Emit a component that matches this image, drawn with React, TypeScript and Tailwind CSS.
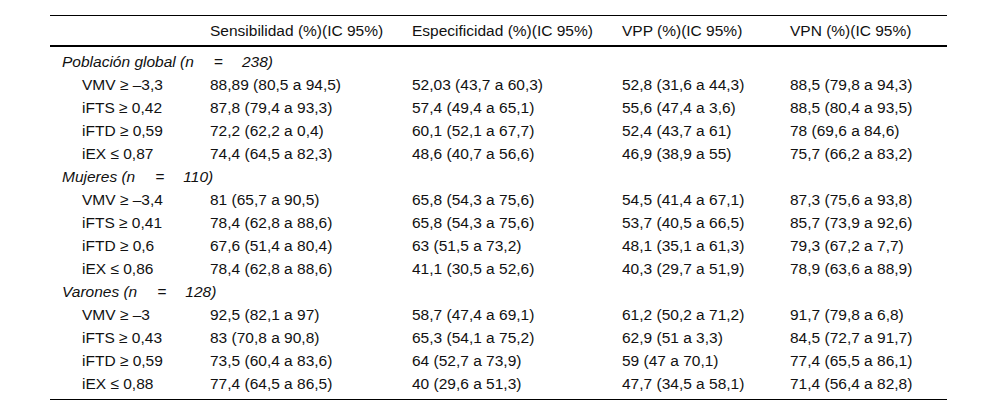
const groups = [
  {
    title: "Población global",
    n: "238",
    rows: [
      ["VMV ≥ –3,3", "88,89 (80,5 a 94,5)", "52,03 (43,7 a 60,3)", "52,8 (31,6 a 44,3)", "88,5 (79,8 a 94,3)"],
      ["iFTS ≥ 0,42", "87,8 (79,4 a 93,3)", "57,4 (49,4 a 65,1)", "55,6 (47,4 a 3,6)", "88,5 (80,4 a 93,5)"],
      ["iFTD ≥ 0,59", "72,2 (62,2 a 0,4)", "60,1 (52,1 a 67,7)", "52,4 (43,7 a 61)", "78 (69,6 a 84,6)"],
      ["iEX ≤ 0,87", "74,4 (64,5 a 82,3)", "48,6 (40,7 a 56,6)", "46,9 (38,9 a 55)", "75,7 (66,2 a 83,2)"],
    ],
  },
  {
    title: "Mujeres",
    n: "110",
    rows: [
      ["VMV ≥ –3,4", "81 (65,7 a 90,5)", "65,8 (54,3 a 75,6)", "54,5 (41,4 a 67,1)", "87,3 (75,6 a 93,8)"],
      ["iFTS ≥ 0,41", "78,4 (62,8 a 88,6)", "65,8 (54,3 a 75,6)", "53,7 (40,5 a 66,5)", "85,7 (73,9 a 92,6)"],
      ["iFTD ≥ 0,6", "67,6 (51,4 a 80,4)", "63 (51,5 a 73,2)", "48,1 (35,1 a 61,3)", "79,3 (67,2 a 7,7)"],
      ["iEX ≤ 0,86", "78,4 (62,8 a 88,6)", "41,1 (30,5 a 52,6)", "40,3 (29,7 a 51,9)", "78,9 (63,6 a 88,9)"],
    ],
  },
  {
    title: "Varones",
    n: "128",
    rows: [
      ["VMV ≥ –3", "92,5 (82,1 a 97)", "58,7 (47,4 a 69,1)", "61,2 (50,2 a 71,2)", "91,7 (79,8 a 6,8)"],
      ["iFTS ≥ 0,43", "83 (70,8 a 90,8)", "65,3 (54,1 a 75,2)", "62,9 (51 a 3,3)", "84,5 (72,7 a 91,7)"],
      ["iFTD ≥ 0,59", "73,5 (60,4 a 83,6)", "64 (52,7 a 73,9)", "59 (47 a 70,1)", "77,4 (65,5 a 86,1)"],
      ["iEX ≤ 0,88", "77,4 (64,5 a 86,5)", "40 (29,6 a 51,3)", "47,7 (34,5 a 58,1)", "71,4 (56,4 a 82,8)"],
    ],
  },
]

const cols = "grid grid-cols-[160px_202px_210px_168px_157px]"

export default function App() {
  return (
    <div className="bg-white w-[1000px] h-[417px] pt-[15px] pl-[50px] text-[15.5px] text-[#111] font-['Liberation_Sans',Arial,sans-serif]">
      <div className="w-[897px] border-t border-black border-b border-b-black">
        <div className={`${cols} h-[31px] items-center border-b-2 border-black`}>
          <div></div>
          <div>Sensibilidad (%)(IC 95%)</div>
          <div>Especificidad (%)(IC 95%)</div>
          <div>VPP (%)(IC 95%)</div>
          <div>VPN (%)(IC 95%)</div>
        </div>

        <div className="pt-[3px] pb-[4px]">
          {groups.map((g) => (
            <div key={g.title}>
              <div className="h-[23px] flex items-center pl-[12px] italic">
                {g.title} (n<span className="inline-block w-[20px]"></span>=<span className="inline-block w-[19px]"></span>{g.n})
              </div>
              {g.rows.map((r) => (
                <div key={r[0]} className={`${cols} h-[23px] items-center`}>
                  <div className="pl-[32px]">{r[0]}</div>
                  <div>{r[1]}</div>
                  <div>{r[2]}</div>
                  <div>{r[3]}</div>
                  <div>{r[4]}</div>
                </div>
              ))}
            </div>
          ))}
        </div>
      </div>
    </div>
  )
}
